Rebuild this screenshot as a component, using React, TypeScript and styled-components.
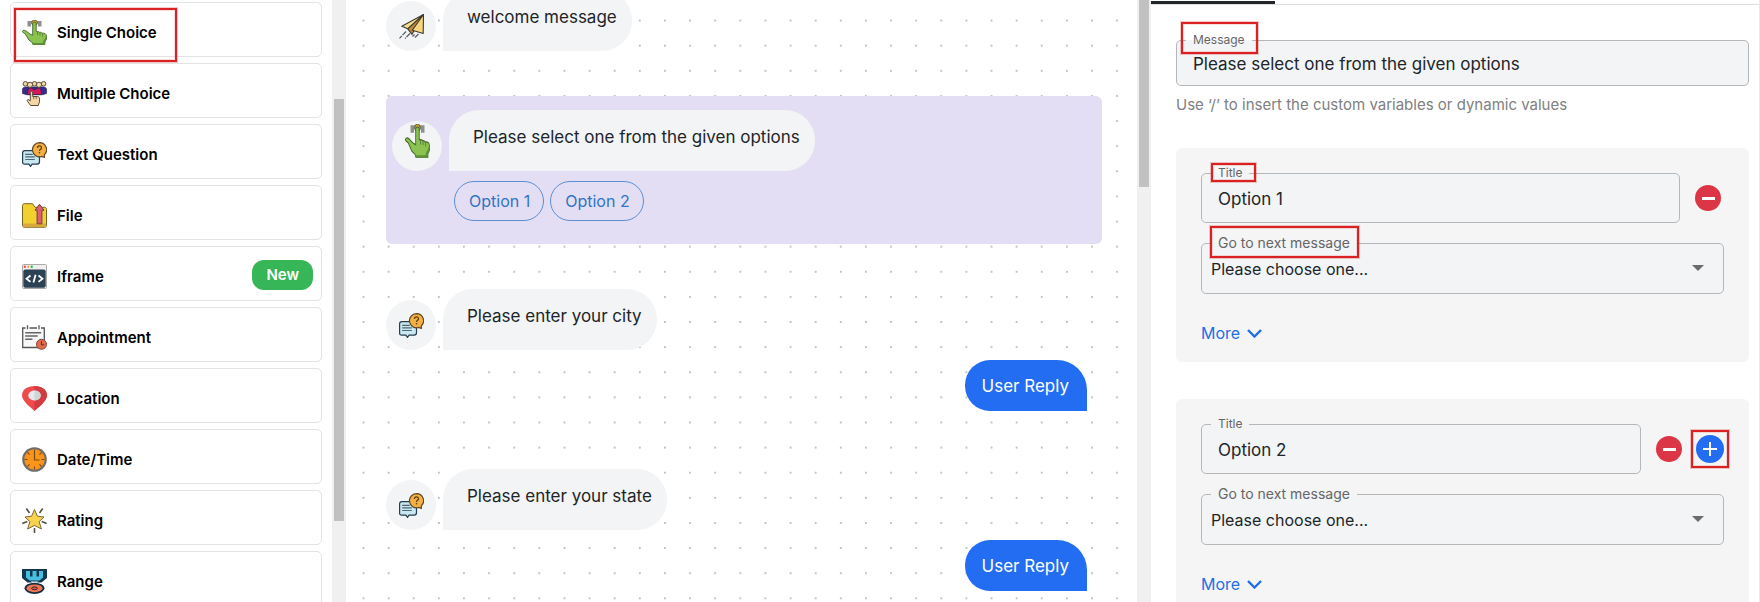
import React, { useId, useState } from "react";
import styled, { createGlobalStyle, css } from "styled-components";

const GlobalStyle = createGlobalStyle`
  *, *::before, *::after { box-sizing: border-box; }
  html, body { margin: 0; padding: 0; }
  body {
    background: #fff;
    color: #212529;
    font-family: Inter, "Liberation Sans", sans-serif;
    font-size: 17px;
    line-height: 24px;
  }
  button, input, select { font: inherit; color: inherit; }
`;

const blue = "#236df2";
const linkBlue = "#1f6fe5";

/* ---------- layout ---------- */

const Page = styled.main`
  display: grid;
  grid-template-columns: 346fr 805fr 609fr;
  height: 100vh;
  overflow: hidden;
`;

const Pane = styled.section`
  position: relative;
  display: flex;
  min-width: 0;
  min-height: 0;
`;

const ScrollTrack = styled.div`
  position: relative;
  flex: none;
  width: 14px;
  padding: 0 2px;
  background: #f0f0f0;
`;

const ScrollThumb = styled.div<{ $top: number; $length: number }>`
  height: ${(p) => p.$length}px;
  margin-top: ${(p) => p.$top}px;
  background: #c1c1c1;
`;

const highlight = css`
  content: "";
  position: absolute;
  border: 2px solid #da2222;
  box-shadow: 0 0 0 1px rgba(218, 34, 34, 0.25), inset 0 0 0 1px rgba(218, 34, 34, 0.15);
  pointer-events: none;
  z-index: 1;
`;

/* ---------- block list ---------- */

const BlockList = styled.ul`
  flex: 1;
  min-width: 0;
  margin: 0;
  padding: 2px 10px 0;
  list-style: none;
  display: flex;
  flex-direction: column;
  gap: 6px;
`;

const BlockItem = styled.li<{ $marked?: boolean }>`
  position: relative;
  display: flex;

  ${(p) =>
    p.$marked &&
    css`
      &::after {
        ${highlight}
        left: 4px;
        top: 6px;
        width: 163px;
        height: 54px;
      }
    `}
`;

const BlockButton = styled.button`
  flex: 1;
  display: flex;
  align-items: center;
  gap: 10px;
  height: 55px;
  padding: 6px 8px 0 11px;
  border: 1px solid #e3e3e3;
  border-radius: 5px;
  background: #fff;
  color: #000;
  font-size: 15px;
  font-weight: 600;
  text-align: left;
  cursor: grab;

  svg { flex: none; }
`;

const NewBadge = styled.span`
  margin: 0 0 4px auto;
  padding: 3px 14px;
  border-radius: 12px;
  background: #36b657;
  color: #fff;
`;

/* ---------- conversation ---------- */

const DotGrid = styled.svg`
  position: absolute;
  inset: 0;
  width: 100%;
  height: 100%;
`;

const Conversation = styled.div`
  position: relative;
  flex: 1;
  min-width: 0;
  margin-top: -10px;
  padding: 0 35px 0 40px;
  display: flex;
  flex-direction: column;
  gap: 45px;
`;

const Exchange = styled.div`
  display: flex;
  flex-direction: column;
  gap: 10px;
  padding-bottom: 13px;
`;

const SelectedStep = styled.div`
  padding: 14px 6px 23px;
  border-radius: 6px;
  background: #e3def3;
`;

const BotRow = styled.div`
  display: flex;
  align-items: flex-end;
  gap: 7px;
`;

const Avatar = styled.div<{ $raised?: boolean }>`
  flex: none;
  display: flex;
  align-items: ${(p) => (p.$raised ? "flex-start" : "center")};
  justify-content: center;
  width: 50px;
  height: 50px;
  padding-top: ${(p) => (p.$raised ? "3px" : "0")};
  border-radius: 50%;
  background: #f2f4f6;
`;

const Bubble = styled.p`
  margin: 0;
  padding: 15px 15px 22px 24px;
  border-radius: 30px 30px 30px 0;
  background: #f2f4f6;
`;

const ReplyBubble = styled.p`
  align-self: flex-end;
  margin: 0 15px 0 0;
  padding: 14px 18px 13px 17px;
  border-radius: 25px 30px 0 25px;
  background: ${blue};
  color: #fff;
`;

const Choices = styled.div`
  display: flex;
  gap: 6px;
  margin: 10px 0 0 62px;
`;

const ChoiceButton = styled.button`
  height: 40px;
  padding: 0 13px 0 14px;
  border: 1px solid #5b8fd3;
  border-radius: 20px;
  background: transparent;
  color: #2f74c6;
  font-size: 16px;
`;

/* ---------- settings ---------- */

const Settings = styled.div`
  flex: 1;
  min-width: 0;
  border-right: 1px solid #e9e9e9;
`;

const TabStrip = styled.div`
  height: 5px;
  padding-top: 1px;
  border-bottom: 1px solid #dedede;
`;

const ActiveTab = styled.div`
  width: 124px;
  height: 3px;
  background: #212529;
`;

const SettingsBody = styled.form`
  padding: 27px 10px 0 25px;
`;

const Fieldset = styled.fieldset`
  position: relative;
  width: 100%;
  min-width: 0;
  margin: 0;
  padding: 0;
  border: 1px solid #b5b8ba;
  border-radius: 5px;
  background: #f2f4f6;
`;

const Legend = styled.legend<{ $large?: boolean }>`
  height: 16px;
  margin-left: 9px;
  padding: 0 7px;
  color: #666;
  font-size: ${(p) => (p.$large ? 14 : 12)}px;
  line-height: 16px;
`;

type Box = { left: number; top: number; width: number; height: number };

const Marker = styled.span<{ $box: Box }>`
  &::after {
    ${highlight}
    left: ${(p) => p.$box.left}px;
    top: ${(p) => p.$box.top}px;
    width: ${(p) => p.$box.width}px;
    height: ${(p) => p.$box.height}px;
  }
`;

const TextInput = styled.input<{ $compact?: boolean }>`
  display: block;
  width: 100%;
  height: ${(p) => (p.$compact ? 37 : 41)}px;
  padding: 0 16px 6px;
  border: 0;
  outline: 0;
  background: transparent;
`;

const SelectWrap = styled.div`
  position: relative;
  display: flex;

  svg {
    position: absolute;
    right: 19px;
    top: 14px;
    pointer-events: none;
  }
`;

const Select = styled.select`
  appearance: none;
  width: 100%;
  height: 42px;
  padding: 0 40px 7px 9px;
  border: 0;
  outline: 0;
  background: transparent;
  font-size: 16px;
`;

const Hint = styled.p`
  margin: 7px 0 31px;
  color: #808080;
  font-size: 15px;
`;

const OptionCard = styled.div`
  display: flex;
  flex-direction: column;
  gap: 12px;
  margin-bottom: 37px;
  padding: 17px 25px;
  border-radius: 6px;
  background: #f5f5f5;
`;

const TitleRow = styled.div`
  display: flex;
  align-items: center;
  gap: 15px;
`;

const RoundActions = styled.div<{ $single?: boolean }>`
  display: flex;
  align-items: center;
  gap: 14px;
  margin-top: 8px;
  padding-right: ${(p) => (p.$single ? 3 : 0)}px;
`;

const RoundButton = styled.button<{ $add?: boolean }>`
  position: relative;
  display: grid;
  place-items: center;
  width: ${(p) => (p.$add ? 28 : 26)}px;
  height: ${(p) => (p.$add ? 28 : 26)}px;
  padding: 0;
  border: 0;
  border-radius: 50%;
  background: ${(p) => (p.$add ? blue : "#dc3545")};

  ${(p) =>
    p.$add &&
    css`
      &::after {
        ${highlight}
        inset: -5px;
      }
    `}
`;

const MoreLink = styled.a`
  display: flex;
  align-items: center;
  align-self: flex-start;
  gap: 7px;
  margin-top: 15px;
  color: ${linkBlue};
  font-size: 16px;
  text-decoration: none;
`;

/* ---------- icons ---------- */

const Icon = ({ children, height = 25 }: { children: React.ReactNode; height?: number }) => (
  <svg width="25" height={height} viewBox="0 0 25 25" preserveAspectRatio="none" aria-hidden="true">
    {children}
  </svg>
);

const TapIcon = ({ height }: { height?: number }) => (
  <Icon height={height}>
    <path d="M5.500 1h14v5.500H16v-3H9v3H5.500Z" fill="#8f8f8f" />
    <circle cx="12.500" cy="2.800" r="2.800" fill="#c2a531" stroke="#55502d" strokeWidth=".7" />
    <path
      d="M10.700 4c0-2.400 3.500-2.400 3.500 0v7.500h1.200c1 0 1.700.2 2.200.8 1.100-.2 2 .1 2.400.9 2.700-.3 4.400.6 4.400 2.800v3.400l-1.500 2.500v2.500h-12l-1-2.300-3-2-3.600-6.200-2.600-1.700c-.8-1.500 1.200-2.500 3-1.500l4 3.100 3 1.500Z"
      fill="#8ac34f"
      stroke="#47662c"
      strokeWidth=".9"
    />
    <path d="M15.500 12v3M18 12.500v3M20.700 13.500v3" stroke="#4e7630" strokeWidth=".8" />
    <path d="M24.300 16v3.400l-1.500 2.500v2.500h-12l-.8-1.500h10.500l1-2.500 1.500-2Z" fill="#5d9136" />
  </Icon>
);

const CrowdIcon = () => (
  <Icon>
    <path d="M.4 12.500V9c0-2 1.200-3 3.200-3h17.800c2 0 3.200 1 3.200 3v3.500l-4 1.200H4.400Z" fill="#3a2c8c" stroke="#221d4e" strokeWidth=".6" />
    <path d="M5.500 13.600c0-4.600 1.300-6.600 3.500-6.600l3.500 2L16 7c2.200 0 3.500 2 3.500 6.600Z" fill="#d8175c" stroke="#33203f" strokeWidth=".7" />
    {[3.4, 12.5, 21.6].map((x) => (
      <circle key={x} cx={x} cy="2.800" r="2.300" fill="#eed5a7" stroke="#4d3f2b" strokeWidth=".9" />
    ))}
    {[8, 17].map((x) => (
      <circle key={x} cx={x} cy="3.800" r="2.600" fill="#f3ddb5" stroke="#4d3f2b" strokeWidth=".9" />
    ))}
    <path
      d="M8.300 11.500c0-1.600 2.400-1.600 2.400 0v4h4.600c1.500 0 2.200.8 2.200 2.300v3l-1.300 3.700H8.500l-3-4.200c-1-1.400.6-2.300 1.500-1.400l1.300 1Z"
      fill="#f4d5a4"
      stroke="#4b3b2a"
      strokeWidth=".9"
    />
    <path d="M11.700 15.700v2.500M14.200 15.700v2.500" stroke="#6b5233" strokeWidth=".8" />
  </Icon>
);

const QuestionIcon = () => (
  <Icon>
    <path
      d="M2.800 8.600h12.700c1.200 0 2 .8 2 2v9c0 1.700-.9 2.600-2.400 2.600h-5l-1.600 2.200-1.600-2.200H2.800C1.200 22.200.6 21.300.6 20v-9c0-1.500.8-2.400 2.200-2.400Z"
      fill="#c9e7f1"
      stroke="#263d4d"
      strokeWidth="1.200"
    />
    <path d="M3.200 12.300h7.500M3.200 14.900h9.600M3.200 17.500h9.600" stroke="#4d6775" strokeWidth="1.200" />
    <path d="M17.500.6a7.100 7.100 0 0 1 4.800 12.300v2.600l-2.700-1A7.100 7.100 0 1 1 17.500.6Z" fill="#f4b043" stroke="#5b4526" strokeWidth="1.200" />
    <path d="M15.400 5.900c.2-2.900 4.300-2.600 4.100 0-.1 1.300-2 1.500-2 3" fill="none" stroke="#5b3e12" strokeWidth="1.300" />
    <circle cx="17.500" cy="10.800" r=".8" fill="#5b3e12" />
  </Icon>
);

const FileIcon = () => (
  <Icon>
    <path d="M2.500.7h8L13 4.300h9.500c1.200 0 2 .8 2 2v16c0 1.200-.8 2-2 2h-20c-1.200 0-2-.8-2-2V2.700c0-1.200.8-2 2-2Z" fill="#f2d02f" stroke="#76632a" />
    <path d="M1 20.500v2.200c0 1 .8 1.500 1.700 1.500h19.800c1 0 1.700-.5 1.700-1.500v-2.200Z" fill="#d8a83c" />
    <path d="M17.500 1.300 22 7.200h-2.100v13.600h-4.800V7.200H13Z" fill="#dc6075" stroke="#7b3a3b" strokeLinejoin="round" />
  </Icon>
);

const IframeIcon = () => (
  <Icon>
    <rect x=".5" y=".5" width="24" height="24" rx="1" fill="#f0efed" stroke="#aaa" />
    <rect x="1.300" y="5.500" width="22.400" height="18.300" rx="2" fill="#2c4153" />
    <circle cx="2.800" cy="2.700" r="1.200" fill="#e84e50" />
    <circle cx="6.200" cy="2.700" r="1.200" fill="#f2ad42" />
    <circle cx="9.700" cy="2.700" r="1.200" fill="#2fb46b" />
    <path d="m8.500 11.500-4 3.200 4 3.200M16.500 11.500l4 3.200-4 3.200M13.600 10.800l-2.200 7.800" fill="none" stroke="#fff" strokeWidth="1.800" />
  </Icon>
);

const AppointmentIcon = () => (
  <Icon>
    <path d="M.7 3h21.600v19.500H.7Z" fill="#f8f8f8" stroke="#565656" strokeWidth="1.300" />
    <path d="M5.500.3v4M17 .3v4" stroke="#fff" strokeWidth="4" />
    <path d="M5.500.3v4M17 .3v4" stroke="#555" strokeWidth="1.300" />
    <path d="M3.200 7.800h16M3.200 11h12.500M3.200 14.200h7.300" stroke="#666" strokeWidth="1.400" />
    <circle cx="19.500" cy="19.300" r="5" fill="#e96a4a" stroke="#7b4538" />
    <path d="M19.500 16.200v3.500h2.800" fill="none" stroke="#603028" strokeWidth="1.100" />
  </Icon>
);

const LocationIcon = () => (
  <Icon>
    <path d="M12.500 0C19.500 0 25 3.600 25 9.300 25 15 17 20.800 12.500 25 8 20.800 0 15 0 9.300 0 3.600 5.500 0 12.500 0Z" fill="#ef4b4c" />
    <path d="M12.500 0C19.500 0 25 3.600 25 9.300 25 15 17 20.800 12.500 25Z" fill="#d33b42" />
    <ellipse cx="12.500" cy="9.500" rx="6.200" ry="5" fill="#e7eaec" />
    <path d="M12.500 4.500c8.200.2 8.200 9.800 0 10Z" fill="#cfd4d7" />
  </Icon>
);

const ClockIcon = () => (
  <Icon>
    <circle cx="12.500" cy="12.500" r="12.300" fill="#716c69" />
    <circle cx="12.500" cy="12.500" r="10.200" fill="#fb9519" />
    <path d="M12.500 5v8h5" fill="none" stroke="#7b4b16" strokeWidth="1.200" />
    {[0, 45, 90, 135, 180, 225, 270, 315].map((a) => (
      <path key={a} d="M12.500 2.500v3" stroke="#764916" strokeWidth="1.100" transform={`rotate(${a} 12.500 12.500)`} />
    ))}
  </Icon>
);

const StarIcon = () => (
  <Icon>
    <path d="M4.300.5 7.500 5M20.700.5 17.500 5M.3 15.500l5-2M24.700 15.500l-5-2M12.500 20v5" stroke="#554f43" strokeWidth="1.600" />
    <path
      d="m12.500 1.500 2.900 6.700 6.600.8-4.900 4.600 2.300 7.400-6.900-3.600-6.900 3.600 2.300-7.400L3 9l6.600-.8Z"
      fill="#f9d34f"
      stroke="#7d6a36"
      strokeLinejoin="round"
    />
  </Icon>
);

const MedalIcon = () => (
  <Icon>
    <path d="M0 0h25v9l-5.500 4.500h-14L0 9Z" fill="#123850" />
    <path d="M4 2h4v5.500h2.500V2h4v5.500H17V2h4v6.500l-3.500 3h-10L4 8.500Z" fill="#45bfe0" />
    <path d="M8.500 12.500h8l-4 2.500Z" fill="#f4f7f8" />
    <ellipse cx="12.500" cy="19.300" rx="10" ry="5.600" fill="#152d3f" />
    <ellipse cx="12.500" cy="19.300" rx="8" ry="3.900" fill="#ed7857" />
    <ellipse cx="12.500" cy="19.300" rx="3" ry="1.400" fill="#d65c3e" stroke="#3b2026" />
  </Icon>
);

const PlaneIcon = () => (
  <Icon>
    <path d="M24.500.5 2.800 12.300l6 2.500Z" fill="#f3dc93" stroke="#3f3a30" strokeWidth="1.100" strokeLinejoin="round" />
    <path d="M24.500.5 8.800 14.800l4.200 5.500Z" fill="#be8938" stroke="#3f3a30" strokeWidth="1.100" strokeLinejoin="round" />
    <path d="M24.500.5 13.300 16.300l10.900 3.200Z" fill="#f6d57e" stroke="#3f3a30" strokeWidth="1.100" strokeLinejoin="round" />
    <path d="M7 17.500.5 24.300M11 19.500l-5 5M15.500 20.500l-2 2M19.500 20l-4 4" stroke="#555a60" strokeWidth="1.200" strokeDasharray="5 1" />
  </Icon>
);

/* ---------- parts ---------- */

const blocks: { label: string; icon: React.ReactNode; isNew?: boolean; marked?: boolean }[] = [
  { label: "Single Choice", icon: <TapIcon />, marked: true },
  { label: "Multiple Choice", icon: <CrowdIcon /> },
  { label: "Text Question", icon: <QuestionIcon /> },
  { label: "File", icon: <FileIcon /> },
  { label: "Iframe", icon: <IframeIcon />, isNew: true },
  { label: "Appointment", icon: <AppointmentIcon /> },
  { label: "Location", icon: <LocationIcon /> },
  { label: "Date/Time", icon: <ClockIcon /> },
  { label: "Rating", icon: <StarIcon /> },
  { label: "Range", icon: <MedalIcon /> },
];

const BotMessage = ({ icon, text, raised }: { icon: React.ReactNode; text: string; raised?: boolean }) => (
  <BotRow>
    <Avatar $raised={raised}>{icon}</Avatar>
    <Bubble>{text}</Bubble>
  </BotRow>
);

const TextField = ({ label, initial, compact, marker }: { label: string; initial: string; compact?: boolean; marker?: Box }) => {
  const id = useId();
  const [value, setValue] = useState(initial);
  return (
    <Fieldset>
      <Legend>
        <label htmlFor={id}>{label}</label>
      </Legend>
      {marker && <Marker $box={marker} />}
      <TextInput id={id} $compact={compact} value={value} onChange={(e) => setValue(e.target.value)} />
    </Fieldset>
  );
};

const NextMessageField = ({ marker }: { marker?: Box }) => {
  const id = useId();
  return (
    <Fieldset>
      <Legend $large>
        <label htmlFor={id}>Go to next message</label>
      </Legend>
      {marker && <Marker $box={marker} />}
      <SelectWrap>
        <Select id={id}>
          <option>Please choose one...</option>
        </Select>
        <svg width="12" height="6" viewBox="0 0 12 6" aria-hidden="true">
          <path d="M0 0h12L6 6Z" fill="#6b6b6b" />
        </svg>
      </SelectWrap>
    </Fieldset>
  );
};

const OptionEditor = ({ title, marked, canAdd }: { title: string; marked?: boolean; canAdd?: boolean }) => (
  <OptionCard>
    <TitleRow>
      <TextField label="Title" initial={title} marker={marked ? { left: 9, top: -18, width: 45, height: 19 } : undefined} />
      <RoundActions $single={!canAdd}>
        <RoundButton type="button" aria-label={`Remove ${title}`}>
          <svg width="13" height="3" viewBox="0 0 13 3" aria-hidden="true">
            <rect width="13" height="3" fill="#fff" />
          </svg>
        </RoundButton>
        {canAdd && (
          <RoundButton type="button" $add aria-label="Add option">
            <svg width="14" height="14" viewBox="0 0 14 14" aria-hidden="true">
              <path d="M7 0v14M0 7h14" stroke="#fff" strokeWidth="2" />
            </svg>
          </RoundButton>
        )}
      </RoundActions>
    </TitleRow>
    <NextMessageField marker={marked ? { left: 8, top: -25, width: 149, height: 32 } : undefined} />
    <MoreLink href="#more">
      More
      <svg width="15" height="9" viewBox="0 0 15 9" aria-hidden="true">
        <path d="m1 1 6.500 6.500L14 1" fill="none" stroke={linkBlue} strokeWidth="2.400" />
      </svg>
    </MoreLink>
  </OptionCard>
);

export default function App() {
  return (
    <>
      <GlobalStyle />
      <Page>
        <Pane aria-label="Blocks">
          <BlockList>
            {blocks.map((b) => (
              <BlockItem key={b.label} $marked={b.marked}>
                <BlockButton type="button">
                  {b.icon}
                  {b.label}
                  {b.isNew && <NewBadge>New</NewBadge>}
                </BlockButton>
              </BlockItem>
            ))}
          </BlockList>
          <ScrollTrack>
            <ScrollThumb $top={99} $length={422} />
          </ScrollTrack>
        </Pane>

        <Pane aria-label="Conversation">
          <DotGrid aria-hidden="true">
            <defs>
              <pattern id="dots" x="5" y="8" width="25.120" height="25.120" patternUnits="userSpaceOnUse">
                <circle cx="12.500" cy="12.500" r="1" fill="#b0b0b0" />
              </pattern>
            </defs>
            <rect width="100%" height="100%" fill="url(#dots)" />
          </DotGrid>
          <Conversation>
            <BotMessage icon={<PlaneIcon />} text="welcome message" />
            <SelectedStep>
              <BotMessage raised icon={<TapIcon height={34} />} text="Please select one from the given options" />
              <Choices>
                <ChoiceButton type="button">Option 1</ChoiceButton>
                <ChoiceButton type="button">Option 2</ChoiceButton>
              </Choices>
            </SelectedStep>
            <Exchange>
              <BotMessage icon={<QuestionIcon />} text="Please enter your city" />
              <ReplyBubble>User Reply</ReplyBubble>
            </Exchange>
            <Exchange>
              <BotMessage icon={<QuestionIcon />} text="Please enter your state" />
              <ReplyBubble>User Reply</ReplyBubble>
            </Exchange>
          </Conversation>
          <ScrollTrack>
            <ScrollThumb $top={0} $length={187} />
          </ScrollTrack>
        </Pane>

        <Pane aria-label="Settings">
          <Settings>
            <TabStrip>
              <ActiveTab />
            </TabStrip>
            <SettingsBody>
              <TextField
                compact
                label="Message"
                initial="Please select one from the given options"
                marker={{ left: 4, top: -26, width: 77, height: 32 }}
              />
              <Hint>Use ‘/’ to insert the custom variables or dynamic values</Hint>
              <OptionEditor title="Option 1" marked />
              <OptionEditor title="Option 2" canAdd />
            </SettingsBody>
          </Settings>
        </Pane>
      </Page>
    </>
  );
}
